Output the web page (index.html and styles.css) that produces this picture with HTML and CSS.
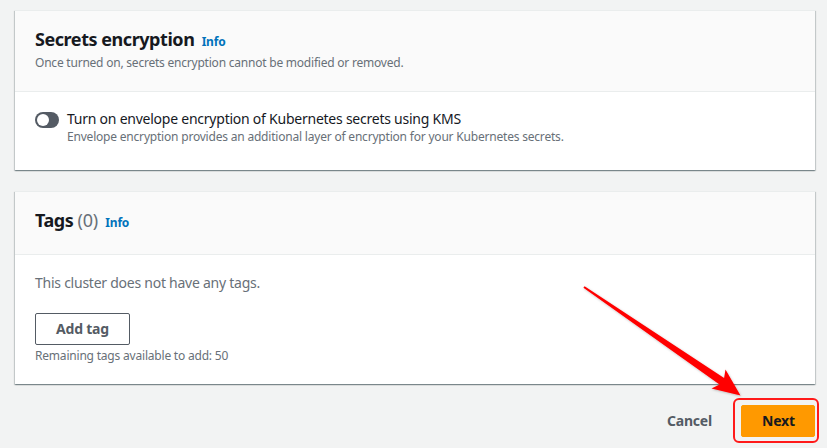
FILE: index.html
```html
<!DOCTYPE html>
<html lang="en">
<head>
<meta charset="utf-8">
<title>Configure cluster</title>
<link rel="stylesheet" href="styles.css">
</head>
<body>
<div class="page">
  <section class="card">
    <div class="card-header">
      <h2 class="title">Secrets encryption <a class="info" href="#">Info</a></h2>
      <p class="desc">Once turned on, secrets encryption cannot be modified or removed.</p>
    </div>
    <div class="card-body body-secrets">
      <div class="toggle-row">
        <span class="toggle"><span class="knob"></span></span>
        <div class="toggle-text">
          <div class="toggle-label">Turn on envelope encryption of Kubernetes secrets using KMS</div>
          <div class="toggle-desc">Envelope encryption provides an additional layer of encryption for your Kubernetes secrets.</div>
        </div>
      </div>
    </div>
  </section>

  <section class="card">
    <div class="card-header header-tags">
      <h2 class="title">Tags <span class="count">(0)</span> <a class="info" href="#">Info</a></h2>
    </div>
    <div class="card-body body-tags">
      <p class="empty">This cluster does not have any tags.</p>
      <button class="btn-normal" type="button">Add tag</button>
      <p class="hint">Remaining tags available to add: 50</p>
    </div>
  </section>

  <div class="footer">
    <button class="btn-link" type="button">Cancel</button>
    <span class="highlight"><button class="btn-primary" type="button">Next</button></span>
  </div>

  <svg class="arrow" width="827" height="448" viewBox="0 0 827 448" aria-hidden="true">
    <defs>
      <filter id="sh" x="-10%" y="-10%" width="120%" height="120%">
        <feDropShadow dx="0.5" dy="0.8" stdDeviation="0.8" flood-color="#000" flood-opacity="0.25"/>
      </filter>
    </defs>
    <polygon filter="url(#sh)" fill="#ff0000" points="584.6,286.2 724.1,378.0 725.5,369.5 740.5,395.5 711.5,388.5 719.5,384.6 583.4,287.8"/>
  </svg>
</div>
</body>
</html>
```

FILE: styles.css
```css
* { box-sizing: border-box; }
html, body { margin: 0; padding: 0; }
body {
  background: #f2f3f3;
  font-family: "Noto Sans", "Open Sans", Arial, sans-serif;
  color: #16191f;
  width: 827px;
  height: 448px;
  overflow: hidden;
}
.page {
  position: relative;
  padding: 10px 12px 0 15px;
  display: flex;
  flex-direction: column;
  gap: 21px;
  height: 448px;
}
.card {
  background: #fff;
  border-top: 1px solid #eaeded;
  box-shadow: 0 1px 1px 0 rgba(0, 28, 36, 0.3), 1px 1px 1px 0 rgba(0, 28, 36, 0.15), -1px 1px 1px 0 rgba(0, 28, 36, 0.15);
}
.card-header {
  background: #fafafa;
  border-bottom: 1px solid #eaeded;
  padding: 17px 20px 20px;
}
.title {
  margin: 0;
  font-size: 18px;
  line-height: 22px;
  font-weight: 700;
  letter-spacing: -0.45px;
  color: #16191f;
}
.count { font-weight: 400; color: #687078; letter-spacing: -0.2px; }
.info {
  font-size: 12px;
  font-weight: 700;
  letter-spacing: -0.2px;
  color: #0073bb;
  text-decoration: none;
  margin-left: 3px;
}
.desc {
  margin: 2px 0 0;
  font-size: 12px;
  line-height: 16px;
  letter-spacing: -0.22px;
  color: #687078;
}
.card-body { padding: 17px 20px 16px; }
.body-secrets { padding-bottom: 25px; }
.header-tags { padding-bottom: 20px; }
.body-tags { padding-top: 18px; padding-bottom: 20px; }
.toggle-row { display: flex; gap: 8px; align-items: flex-start; }
.toggle {
  flex: none;
  width: 24px;
  height: 16px;
  margin-top: 3px;
  border-radius: 8px;
  background: #545b64;
  display: flex;
  align-items: center;
  padding: 0 2px;
}
.knob {
  width: 12px;
  height: 12px;
  border-radius: 50%;
  background: #fff;
}
.toggle-label { font-size: 14px; line-height: 20px; letter-spacing: -0.24px; color: #16191f; }
.toggle-desc { font-size: 12px; line-height: 16px; letter-spacing: -0.2px; color: #687078; }
.empty {
  margin: 0;
  font-size: 14px;
  line-height: 20px;
  letter-spacing: -0.25px;
  color: #687078;
}
.btn-normal {
  margin-top: 20px;
  font-family: inherit;
  font-size: 14px;
  line-height: 22px;
  font-weight: 700;
  letter-spacing: -0.2px;
  color: #545b64;
  background: #fff;
  border: 1px solid #545b64;
  border-radius: 2px;
  padding: 3px 20px;
  height: 32px;
}
.hint {
  margin: 3px 0 0;
  font-size: 12px;
  line-height: 16px;
  letter-spacing: -0.2px;
  color: #687078;
}
.footer {
  display: flex;
  justify-content: flex-end;
  align-items: center;
  gap: 8px;
  margin-top: 0;
}
.btn-link, .btn-primary {
  font-family: inherit;
  font-size: 14px;
  line-height: 22px;
  font-weight: 700;
  letter-spacing: -0.2px;
  padding: 4px 20px;
  border-radius: 2px;
  height: 32px;
}
.btn-link {
  background: transparent;
  border: 1px solid transparent;
  color: #545b64;
}
.btn-primary {
  background: #ff9900;
  border: 1px solid #ff9900;
  color: #16191f;
  width: 74px;
}
.highlight { position: relative; display: block; }
.highlight::after {
  content: "";
  position: absolute;
  top: -7px;
  right: -4px;
  bottom: -6px;
  left: -8px;
  border: 2px solid #ff1a1a;
  border-radius: 6px;
}
.arrow {
  position: absolute;
  left: 0;
  top: 0;
  pointer-events: none;
}
```
